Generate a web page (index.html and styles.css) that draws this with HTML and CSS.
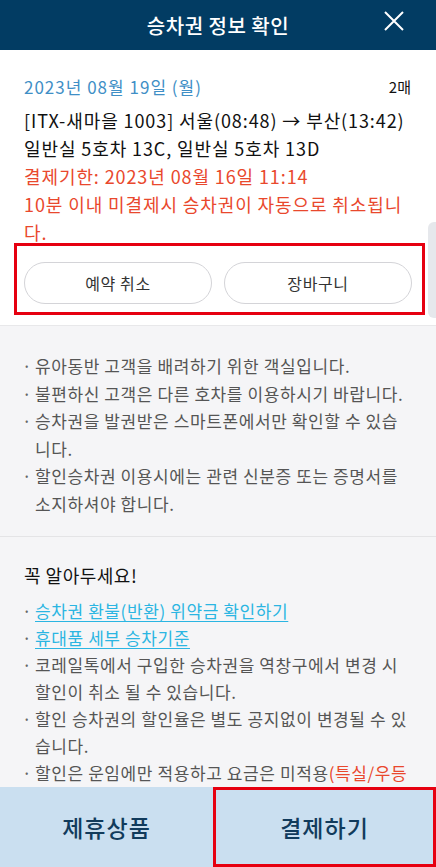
FILE: index.html
```html
<!DOCTYPE html>
<html>
<head>
    <meta charset="utf-8">
    <title>승차권 정보 확인</title>
    <link rel="stylesheet" href="styles.css">
</head>
<body>
<header class="top-bar">
    <h1>승차권 정보 확인</h1>
    <a href="#" class="close-btn" aria-label="닫기">
        <svg width="22" height="22" viewBox="0 0 22 22">
            <path d="M2 2 L20 20 M20 2 L2 20" stroke="#ffffff" stroke-width="2" fill="none"/>
        </svg>
    </a>
</header>
<main class="content">
    <div class="scroll-thumb"></div>
    <section class="ticket">
        <div class="date-row">
            <span class="date">2023년 08월 19일 (월)</span>
            <span class="count">2매</span>
        </div>
        <p class="line">[ITX-새마을 1003] 서울(08:48) → 부산(13:42)</p>
        <p class="line">일반실 5호차 13C, 일반실 5호차 13D</p>
        <p class="line warn">결제기한: 2023년 08월 16일 11:14</p>
        <p class="line warn">10분 이내 미결제시 승차권이 자동으로 취소됩니다.</p>
        <div class="actions-box">
            <a href="#" class="pill-btn">예약 취소</a>
            <a href="#" class="pill-btn">장바구니</a>
        </div>
    </section>
    <section class="notice">
        <ul class="dot-list">
            <li>유아동반 고객을 배려하기 위한 객실입니다.</li>
            <li>불편하신 고객은 다른 호차를 이용하시기 바랍니다.</li>
            <li>승차권을 발권받은 스마트폰에서만 확인할 수 있습니다.</li>
            <li>할인승차권 이용시에는 관련 신분증 또는 증명서를 소지하셔야 합니다.</li>
        </ul>
    </section>
    <section class="notice must-know">
        <h2>꼭 알아두세요!</h2>
        <ul class="dot-list">
            <li><a href="#" class="link">승차권 환불(반환) 위약금 확인하기</a></li>
            <li><a href="#" class="link">휴대품 세부 승차기준</a></li>
            <li>코레일톡에서 구입한 승차권을 역창구에서 변경 시 할인이 취소 될 수 있습니다.</li>
            <li>할인 승차권의 할인율은 별도 공지없이 변경될 수 있습니다.</li>
            <li>할인은 운임에만 적용하고 요금은 미적용<span class="red">(특실/우등실 요금)</span>됩니다.</li>
        </ul>
    </section>
</main>
<footer class="bottom-bar">
    <a href="#" class="bottom-btn">제휴상품</a>
    <a href="#" class="bottom-btn pay">결제하기</a>
</footer>
</body>
</html>
```

FILE: styles.css
```css
* {
	box-sizing: border-box;
}

html, body {
	margin: 0;
	height: 100%;
}

body {
	display: flex;
	flex-direction: column;
	overflow: hidden;
	font-family: "Noto Sans CJK KR", "Noto Sans", sans-serif;
	color: #222222;
	background-color: #ffffff;
}

a {
	text-decoration: none;
	color: inherit;
}

.top-bar {
	position: relative;
	height: 50px;
	flex: none;
	display: flex;
	justify-content: center;
	align-items: center;
	background-color: #023c63;
	color: #ffffff;
}

.top-bar h1 {
	margin: 0;
	font-size: 20px;
	font-weight: 500;
	letter-spacing: 0.5px;
}

.close-btn {
	position: absolute;
	right: 31px;
	top: 10px;
	width: 22px;
	height: 22px;
	display: flex;
}

.content {
	position: relative;
	flex: 1;
	overflow: hidden;
}

.scroll-thumb {
	position: absolute;
	right: 0;
	top: 172px;
	width: 8px;
	height: 96px;
	border-radius: 6px 0 0 6px;
	background-color: #e6e8ec;
}

.ticket {
	padding: 20px 24px 10px 24px;
	border-bottom: 1px solid #e8e8ea;
}

.date-row {
	display: flex;
	justify-content: space-between;
	align-items: center;
	height: 32px;
	margin-bottom: 4px;
}

.date {
	color: #3f8fc6;
	font-size: 17px;
	letter-spacing: 1px;
}

.count {
	font-size: 15px;
	color: #111111;
	margin-right: 1px;
}

.line {
	margin: 0;
	font-size: 18px;
	line-height: 28px;
	color: #111111;
	letter-spacing: 0.9px;
}

.line.warn {
	color: #e9482d;
}

.actions-box {
	position: relative;
	display: flex;
	gap: 12px;
	margin: -3px -13px 0 -10px;
	padding: 16px 10px 8px 7px;
	border: 3px solid #e60010;
	background-color: #ffffff;
}

.pill-btn {
	flex: 1;
	height: 42px;
	display: flex;
	justify-content: center;
	align-items: center;
	border: 1px solid #d4d4d8;
	border-radius: 21px;
	font-size: 16px;
	letter-spacing: 0.6px;
	color: #333333;
	background-color: #ffffff;
}

.notice {
	background-color: #f5f5f7;
	padding: 26px 24px 19px 24px;
	border-bottom: 1px solid #e4e4e6;
}

.dot-list {
	list-style: none;
	margin: 0;
	padding: 0;
}

.dot-list li {
	position: relative;
	padding-left: 11px;
	font-size: 17px;
	line-height: 27.5px;
	color: #555555;
	letter-spacing: 0.6px;
}

.dot-list li::before {
	content: "·";
	position: absolute;
	left: -2px;
	top: 0;
	color: #666666;
}

.must-know {
	border-bottom: none;
	padding-top: 24px;
}

.must-know h2 {
	margin: 0 0 8px 0;
	font-size: 18px;
	font-weight: 400;
	line-height: 28px;
	letter-spacing: 0.5px;
	color: #111111;
}

.must-know .dot-list li {
	line-height: 27px;
}

.link {
	color: #2bb5e2;
	text-decoration: underline;
	text-underline-offset: 3px;
	text-decoration-thickness: 1px;
}

.red {
	color: #e9482d;
}

.bottom-bar {
	flex: none;
	height: 80px;
	display: grid;
	grid-template-columns: 213px 1fr;
	background-color: #cadff0;
}

.bottom-btn {
	display: flex;
	justify-content: center;
	align-items: center;
	font-size: 23px;
	font-weight: 500;
	letter-spacing: 1px;
	color: #113b5c;
}

.bottom-btn.pay {
	border: 3px solid #e60010;
}
```
